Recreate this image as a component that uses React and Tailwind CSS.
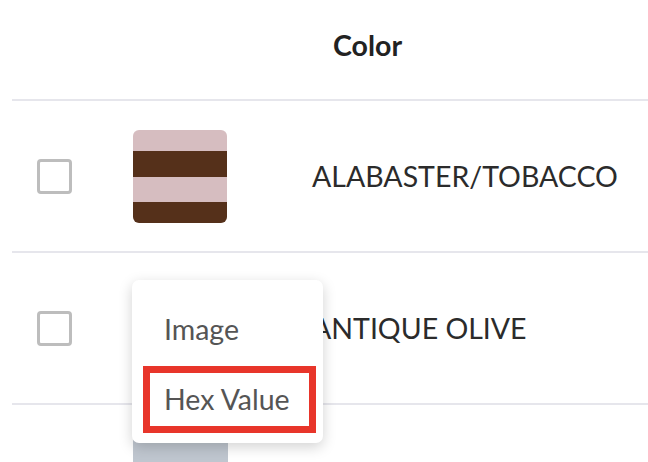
import React from 'react';

const rows = [
  { name: 'ALABASTER/TOBACCO', swatch: 'stripes' },
  { name: 'ANTIQUE OLIVE', swatch: 'none' },
  { name: '', swatch: 'gray' },
];

const Checkbox = () => (
  <div className="w-[35px] h-[35px] shrink-0 rounded-[4px] border-[3px] border-[#bdbdbd] bg-white" />
);

const Swatch = ({ kind }) => {
  if (kind === 'stripes') {
    return (
      <div className="w-[94px] h-[93px] shrink-0 rounded-[6px] overflow-hidden flex flex-col">
        <div className="h-[21px] bg-[#d6bdc0]" />
        <div className="h-[26px] bg-[#55301a]" />
        <div className="h-[25px] bg-[#d6bdc0]" />
        <div className="h-[21px] bg-[#55301a]" />
      </div>
    );
  }
  if (kind === 'gray') {
    return <div className="w-[95px] h-[93px] shrink-0 rounded-[6px] bg-[#bfc6cf]" />;
  }
  return <div className="w-[94px] h-[93px] shrink-0" />;
};

export default function App() {
  return (
    <div
      className="relative w-[648px] h-[462px] overflow-hidden bg-white"
      style={{ fontFamily: 'Lato, "Open Sans", sans-serif' }}
    >
      {/* header */}
      <div className="ml-3 h-[101px] pb-[9px] border-b-2 border-[#e6e6ec] flex items-center">
        <span className="ml-[321px] text-[28.5px] font-bold text-[#222] leading-none">Color</span>
      </div>

      {rows.map((row, i) => (
        <div key={i} className="ml-3 h-[152px] border-b-2 border-[#e6e6ec] flex items-center">
          <div className="ml-[25px]">
            <Checkbox />
          </div>
          <div className="ml-[61px]">
            <Swatch kind={row.swatch} />
          </div>
          <span className="ml-[85px] text-[28.5px] text-[#2b2b2b] leading-none">{row.name}</span>
        </div>
      ))}

      {/* dropdown menu */}
      <div className="absolute left-[132px] top-[280px] w-[191px] h-[163px] bg-white rounded-[7px] shadow-[0_4px_14px_rgba(0,0,0,0.18)] flex flex-col">
        <div className="h-[86px] flex items-center pl-[32px] pt-[12px] text-[28.5px] text-[#555] leading-none">
          Image
        </div>
        <div className="ml-[11px] w-[173px] h-[67px] border-[7px] border-[#e8352a] flex items-center pl-[14px] text-[28.5px] text-[#555] leading-none">
          Hex Value
        </div>
      </div>
    </div>
  );
}
